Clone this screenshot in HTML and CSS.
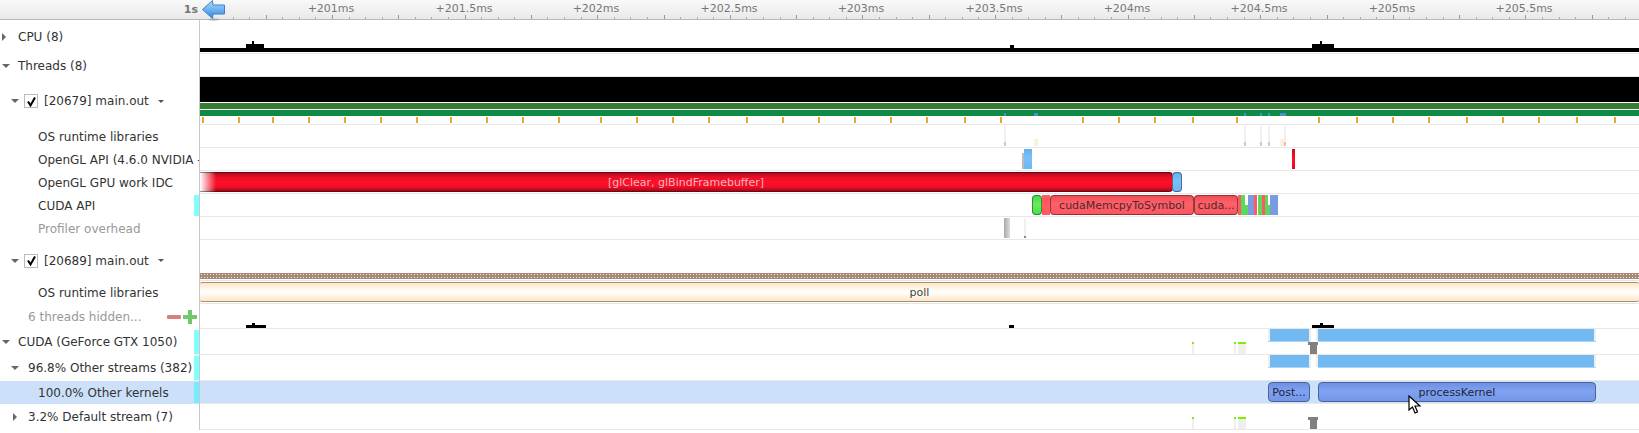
FILE: index.html
```html
<!DOCTYPE html>
<html lang="en">
<head>
    <meta charset="UTF-8">
    <title>Timeline</title>
    <link rel="stylesheet" href="styles.css">
    <script src="script.js" defer></script>
</head>
<body>
    <div class="timeline">
        <div class="ruler">
            <div class="rulerCorner">1s</div>
            <div class="rulerScale" id="rulerScale">
                <svg class="backArrow" width="24" height="22" viewBox="0 0 24 22">
                    <defs>
                        <linearGradient id="arrowFill" x1="0" y1="0" x2="0" y2="1">
                            <stop offset="0" stop-color="#b4dcfa"/>
                            <stop offset="0.5" stop-color="#6db4f0"/>
                            <stop offset="1" stop-color="#3384d8"/>
                        </linearGradient>
                    </defs>
                    <ellipse cx="12" cy="19.5" rx="6" ry="1.2" fill="#999" opacity="0.6"/>
                    <path d="M0.5 9.5 L10.5 0.5 L11 5 L22.5 5 L22.5 14 L11 14 L10.5 18.5 Z" fill="url(#arrowFill)" stroke="#3a80c8" stroke-width="1"/>
                </svg>
            </div>
        </div>

        <div class="row rowCpu">
            <div class="label level0"><span class="tri triRight"></span>CPU (8)</div>
            <div class="track">
                <div class="cpuBar"></div>
                <i class="bump" style="left:46px;width:18px"></i>
                <i class="bumpTop" style="left:52px;width:2px"></i>
                <i class="bump bumpSmall" style="left:810px;width:4px"></i>
                <i class="bump" style="left:1112px;width:22px"></i>
                <i class="bumpTop" style="left:1120px;width:2px"></i>
            </div>
        </div>

        <div class="row rowPlain">
            <div class="label level0"><span class="tri triDown"></span>Threads (8)</div>
            <div class="track"></div>
        </div>

        <div class="row rowThread">
            <div class="label level1">
                <span class="tri triDown"></span>
                <span class="check"><svg width="11" height="11" viewBox="0 0 11 11"><path d="M2 5.5 L4.5 9.5 L9 1.5" fill="none" stroke="#000" stroke-width="2"/></svg></span>
                <span class="threadName">[20679] main.out</span>
                <span class="tri triSmall"></span>
            </div>
            <div class="track">
                <div class="barBlack"></div>
                <div class="barGreenDark"></div>
                <div class="barGreen">
                    <i class="syncMark" style="left:804px;width:2px"></i>
                    <i class="syncMark" style="left:834px;width:4px"></i>
                    <i class="syncMark" style="left:1044px;width:2px"></i>
                    <i class="syncMark" style="left:1060px;width:2px"></i>
                    <i class="syncMark" style="left:1068px;width:2px"></i>
                    <i class="syncMark" style="left:1080px;width:6px"></i>
                </div>
                <div class="tickRow" id="threadTicks"></div>
            </div>
        </div>

        <div class="row rowPlain">
            <div class="label level2">OS runtime libraries</div>
            <div class="track">
                <i class="osCall" style="left:804px"></i>
                <i class="osCream" style="left:834px"></i>
                <i class="osCall" style="left:1044px"></i>
                <i class="osCall" style="left:1060px"></i>
                <i class="osCall" style="left:1068px"></i>
                <i class="osCream" style="left:1080px"></i>
                <i class="osCall" style="left:1084px"></i>
            </div>
        </div>

        <div class="row rowPlain">
            <div class="label level2"><span class="clip">OpenGL API (4.6.0 NVIDIA - Compatibility</span></div>
            <div class="track">
                <i class="ev flat evGrey" style="left:822px;width:2px"></i>
                <i class="ev flat evBlue" style="left:824px;width:8px"></i>
                <i class="ev flat evRedFlat" style="left:1092px;width:3px"></i>
            </div>
        </div>

        <div class="row rowPlain">
            <div class="label level2">OpenGL GPU work IDC</div>
            <div class="track">
                <div class="ev pill evGlRed" style="left:0;width:973px">[glClear, glBindFramebuffer]</div>
                <i class="ev pill evBluePill" style="left:972px;width:10px"></i>
            </div>
        </div>

        <div class="row rowPlain">
            <div class="label level2 marked">CUDA API</div>
            <div class="track">
                <i class="ev pill evGreen" style="left:832px;width:10px"></i>
                <i class="ev flat evSalmon" style="left:842px;width:8px"></i>
                <div class="ev pill evSalmonPill" style="left:850px;width:144px">cudaMemcpyToSymbol</div>
                <div class="ev pill evSalmonPill" style="left:994px;width:44px">cuda...</div>
                <i class="ev flat evSalmon" style="left:1038px;width:3px"></i>
                <i class="ev flat evLime" style="left:1041px;width:4px"></i>
                <i class="ev flat evLime evLow" style="left:1045px;width:3px"></i>
                <i class="ev flat evPeri" style="left:1048px;width:6px"></i>
                <i class="ev flat evSalmon" style="left:1054px;width:3px"></i>
                <i class="ev flat evLime" style="left:1058px;width:4px"></i>
                <i class="ev flat evSalmon" style="left:1062px;width:3px"></i>
                <i class="ev flat evLime" style="left:1065px;width:3px"></i>
                <i class="ev flat evLime evLow" style="left:1068px;width:2px"></i>
                <i class="ev flat evPeri" style="left:1070px;width:8px"></i>
            </div>
        </div>

        <div class="row rowPlain">
            <div class="label level2 muted">Profiler overhead</div>
            <div class="track">
                <i class="ev flat evSilver" style="left:804px;width:6px"></i>
                <i class="osCall tallCall" style="left:824px"></i>
            </div>
        </div>

        <div class="row rowThreadShort">
            <div class="label level1">
                <span class="tri triDown"></span>
                <span class="check"><svg width="11" height="11" viewBox="0 0 11 11"><path d="M2 5.5 L4.5 9.5 L9 1.5" fill="none" stroke="#000" stroke-width="2"/></svg></span>
                <span class="threadName">[20689] main.out</span>
                <span class="tri triSmall"></span>
            </div>
            <div class="track"><div class="hatch"></div></div>
        </div>

        <div class="row rowPlain">
            <div class="label level2">OS runtime libraries</div>
            <div class="track"><div class="poll">poll</div></div>
        </div>

        <div class="row rowHidden">
            <div class="label level1Plain muted">
                6 threads hidden...
                <span class="minus"></span>
                <span class="plus"></span>
            </div>
            <div class="track">
                <i class="lowBump" style="left:46px;width:20px"></i>
                <i class="lowBumpTop" style="left:52px;width:3px"></i>
                <i class="lowBump" style="left:809px;width:5px"></i>
                <i class="lowBump" style="left:1112px;width:22px"></i>
                <i class="lowBumpTop" style="left:1120px;width:3px"></i>
            </div>
        </div>

        <div class="row rowGpu">
            <div class="label level0 marked"><span class="tri triDown"></span>CUDA (GeForce GTX 1050)</div>
            <div class="track">
                <i class="kernelBlock" style="left:1070px;width:39px"></i>
                <i class="kernelBlock" style="left:1118px;width:276px"></i>
                <i class="kernelLine" style="left:1068px;width:42px"></i>
                <i class="kernelLine" style="left:1118px;width:278px"></i>
                <i class="tee" style="left:1108px"></i>
                <i class="tip" style="left:992px;width:2px"></i>
                <i class="tip" style="left:1034px;width:2px"></i>
                <i class="tip" style="left:1038px;width:8px"></i>
            </div>
        </div>

        <div class="row rowGpu">
            <div class="label level1Tri marked"><span class="tri triDown"></span>96.8% Other streams (382)</div>
            <div class="track">
                <i class="kernelBlock" style="left:1070px;width:39px"></i>
                <i class="kernelBlock" style="left:1118px;width:276px"></i>
                <i class="kernelLine" style="left:1068px;width:42px"></i>
                <i class="kernelLine" style="left:1118px;width:278px"></i>
            </div>
        </div>

        <div class="row rowSelected">
            <div class="label level2 marked">100.0% Other kernels</div>
            <div class="track">
                <div class="ev pill evKernel" style="left:1068px;width:42px">Post...</div>
                <div class="ev pill evKernel" style="left:1118px;width:278px">processKernel</div>
            </div>
        </div>

        <div class="row rowGpu">
            <div class="label level1Tri"><span class="tri triRight"></span>3.2% Default stream (7)</div>
            <div class="track">
                <i class="tee" style="left:1108px"></i>
                <i class="tip" style="left:992px;width:2px"></i>
                <i class="tip" style="left:1034px;width:2px"></i>
                <i class="tip" style="left:1038px;width:8px"></i>
            </div>
        </div>
    </div>

    <svg class="cursor" width="13" height="20" viewBox="0 0 13 20">
        <path d="M1 1 L1 15 L4.5 12 L7 18 L9.5 17 L7 11 L12 11 Z" fill="#fff" stroke="#000" stroke-width="1.2"/>
    </svg>
</body>
</html>
```

FILE: styles.css
```css
body {
    margin: 0;
    background-color: #fff;
    font-family: "DejaVu Sans", sans-serif;
    font-size: 12px;
    color: #333;
    overflow: hidden;
}
.timeline {
    width: 1639px;
}

/* ruler */
.ruler {
    display: flex;
    height: 19px;
    border-bottom: 1px solid #b8b8b8;
    background: linear-gradient(#f9f9f9, #e9e9e9);
}
.rulerCorner {
    box-sizing: border-box;
    width: 200px;
    padding-right: 2px;
    line-height: 20px;
    text-align: right;
    font-size: 11px;
    font-weight: bold;
    color: #777;
}
.rulerScale {
    position: relative;
    flex: 1;
}
.rulerLabel {
    position: absolute;
    top: 2px;
    width: 80px;
    margin-left: -41px;
    text-align: center;
    font-size: 11px;
    color: #777;
}
.rulerTick {
    position: absolute;
    bottom: 0;
    width: 1px;
    height: 2px;
    background-color: #aaa;
}
.rulerTick.major {
    height: 4px;
    background-color: #999;
}
.backArrow {
    position: absolute;
    left: 2px;
    top: 0;
    z-index: 2;
}

/* rows */
.row {
    display: flex;
}
.rowCpu { height: 34px; }
.rowPlain { height: 23px; }
.rowThread { height: 48px; }
.rowThreadShort { height: 41px; }
.rowHidden { height: 25px; }
.rowGpu { height: 26px; }
.rowSelected {
    height: 23px;
    background-color: #cce0fa;
}
.label {
    position: relative;
    box-sizing: border-box;
    display: flex;
    align-items: center;
    width: 200px;
    flex-shrink: 0;
    border-right: 1px solid #c8c8c8;
    white-space: nowrap;
}
.level0 { padding-left: 18px; }
.level1 { padding-left: 11px; }
.level1Plain { padding-left: 28px; }
.level1Tri { padding-left: 28px; }
.level2 { padding-left: 38px; }
.muted { color: #999; }
.clip {
    overflow: hidden;
}
.marked::after {
    content: "";
    position: absolute;
    right: 0;
    top: 1px;
    bottom: 1px;
    width: 5px;
    background-color: #80ffff;
}
.rowSelected .marked::after {
    background-color: #70f0ff;
}
.track {
    position: relative;
    box-sizing: border-box;
    flex: 1;
    border-bottom: 1px solid #e8e8e8;
}
.track i {
    position: absolute;
    display: block;
}

/* tree arrows */
.tri {
    position: absolute;
    width: 0;
    height: 0;
    border-style: solid;
    border-color: transparent;
}
.triRight {
    border-width: 4px 0 4px 4px;
    border-left-color: #666;
}
.triDown {
    border-width: 4px 4px 0 4px;
    border-top-color: #666;
}
.level0 .tri { left: 2px; }
.level1Tri .tri { left: 11px; }
.level1Tri .triRight { left: 13px; }
.level1 .triDown { left: 11px; }
.level1 .tri.triSmall {
    position: static;
    margin-left: 9px;
    border-width: 3px 3px 0 3px;
    border-top-color: #555;
}
.check {
    display: flex;
    align-items: center;
    justify-content: center;
    box-sizing: border-box;
    width: 14px;
    height: 14px;
    margin-left: 13px;
    border: 1px solid #bbb;
    background-color: #fff;
}
.threadName {
    margin-left: 6px;
}

/* cpu graph */
.cpuBar {
    height: 4px;
    margin-top: 28px;
    background-color: #000;
}
.bump {
    top: 24px;
    height: 4px;
    background-color: #000;
}
.bumpSmall {
    top: 25px;
    height: 3px;
}
.bumpTop {
    top: 21px;
    height: 3px;
    background-color: #000;
}
.lowBump {
    bottom: 0;
    height: 3px;
    background-color: #000;
}
.lowBumpTop {
    bottom: 3px;
    height: 2px;
    background-color: #000;
}

/* thread bars */
.barBlack {
    height: 25px;
    margin-bottom: 1px;
    background-color: #000;
}
.barGreenDark {
    height: 6px;
    margin-bottom: 1px;
    background-color: #367d32;
}
.barGreen {
    position: relative;
    height: 6px;
    margin-bottom: 1px;
    background-color: #0f8a43;
}
.syncMark {
    bottom: 0;
    height: 3px;
    background-color: #4a90d0;
}
.tickRow {
    position: relative;
    height: 6px;
}
.threadTick {
    position: absolute;
    top: 0;
    width: 2px;
    height: 6px;
    background-color: #e8a830;
}
.osCall {
    top: 1px;
    bottom: 1px;
    width: 2px;
    background: linear-gradient(#f0f0f0 80%, #d8c8b0 80%);
}
.tallCall {
    background: linear-gradient(#f0f0f0 90%, #888 90%);
}
.osCream {
    bottom: 1px;
    width: 4px;
    height: 7px;
    background: linear-gradient(90deg, #fdf4e6, #fbecd6);
}

/* events */
.ev {
    position: absolute;
    top: 1px;
    bottom: 1px;
    box-sizing: border-box;
    overflow: hidden;
    line-height: 19px;
    text-align: center;
    white-space: nowrap;
}
.pill {
    border-radius: 4px;
    border: 1px solid rgba(0, 0, 0, 0.4);
}
.evGlRed {
    border-left: none;
    border-radius: 0 4px 4px 0;
    color: #f8b4bc;
    font-size: 11px;
    background:
        linear-gradient(90deg, #fff 0, rgba(255, 255, 255, 0) 16px),
        linear-gradient(#b00a1c, #e80e26 22%, #ff1028 50%, #f00e26 78%, #a00818);
}
.evBluePill,
.evBlue {
    background: linear-gradient(#64aeea, #78c0f6 40%, #70b8f2);
}
.evBlue { top: 1px; }
.evGrey {
    top: 5px;
    background-color: #bbb;
}
.evRedFlat {
    background: linear-gradient(#d00a1c, #ff1028 50%, #e00a20);
}
.evGreen {
    background: linear-gradient(#4cd84c, #64ee5c 50%, #50dc50);
}
.evSalmon {
    background-color: #ff5a64;
}
.evSalmonPill {
    background: linear-gradient(#f04c58, #ff6068 40%, #fb5660);
    font-size: 11px;
    color: #4a2a30;
}
.evLime {
    background-color: #5cd85c;
}
.evLow {
    top: 11px;
}
.evPeri {
    background-color: #7b9be0;
}
.evSilver {
    background: linear-gradient(90deg, #aaa, #ddd);
}
.evKernel {
    background: linear-gradient(#6f8fe0, #80a2f2 45%, #7496e6);
    border-color: #4a62a0;
    font-size: 11px;
    color: #20263c;
}

/* second thread */
.hatch {
    height: 6px;
    margin-top: 33px;
    background-color: #a88a74;
    background-image: radial-gradient(#f0e8e0 35%, transparent 45%);
    background-size: 3px 3px;
}
.poll {
    position: absolute;
    top: 1px;
    left: 0;
    right: 0;
    bottom: 1px;
    box-sizing: border-box;
    border-top: 1px solid #a89070;
    border-bottom: 1px solid #a89070;
    border-radius: 2px;
    line-height: 19px;
    text-align: center;
    font-size: 11px;
    color: #444;
    background: linear-gradient(#fce6c8, #fffdf9 45%, #fffdf9 55%, #fce6c8);
}
.minus {
    position: absolute;
    left: 167px;
    top: 11px;
    width: 14px;
    height: 4px;
    border-radius: 1px;
    background-color: #d88080;
}
.plus {
    position: absolute;
    left: 183px;
    top: 6px;
    width: 14px;
    height: 14px;
    background:
        linear-gradient(#70c870, #70c870) center / 14px 4px no-repeat,
        linear-gradient(#70c870, #70c870) center / 4px 14px no-repeat;
}

/* cuda rows */
.kernelBlock {
    top: 0;
    height: 12px;
    background-color: #72b9f2;
    box-shadow: -2px 0 #eee, 2px 0 #eee;
}
.kernelLine {
    top: 12px;
    height: 1px;
    background-color: #a8d4f6;
}
.tee {
    top: 13px;
    bottom: 0;
    width: 10px;
    background:
        linear-gradient(#808080, #808080) top / 10px 3px no-repeat,
        linear-gradient(#808080, #808080) center / 7px 12px no-repeat;
}
.tip {
    top: 13px;
    bottom: 0;
    background: linear-gradient(#7cf000 2px, #efefef 2px);
}
.cursor {
    position: absolute;
    left: 1408px;
    top: 395px;
}
```

FILE: script.js
```js
const threadTickXs = [202, 238, 272, 308, 344, 380, 416, 450, 486, 522, 558, 600, 636, 672,
    708, 746, 782, 818, 854, 890, 926, 964, 1000, 1082, 1118, 1154,
    1192, 1236, 1318, 1356, 1392, 1428, 1466, 1502, 1538, 1576, 1614];

const leftOffset = 200; // 왼쪽 라벨 칸 너비
const msWidth = 265.2;
const firstMsX = 332 - leftOffset;

function buildRuler() {
    const scale = document.getElementById('rulerScale');
    const minorStep = msWidth / 16;
    for (let i = -6; i * minorStep + firstMsX < 1440; i++) {
        const tick = document.createElement('div');
        tick.className = i % 4 === 0 ? 'rulerTick major' : 'rulerTick';
        tick.style.left = Math.round(firstMsX + i * minorStep) + 'px';
        scale.appendChild(tick);
    }
    for (let i = 0; i < 10; i++) {
        const label = document.createElement('div');
        label.className = 'rulerLabel';
        label.textContent = '+' + (201 + i / 2) + 'ms';
        label.style.left = Math.round(firstMsX + i * msWidth / 2) + 'px';
        scale.appendChild(label);
    }
}

function buildThreadTicks() {
    const row = document.getElementById('threadTicks');
    threadTickXs.forEach((x) => {
        const tick = document.createElement('div');
        tick.className = 'threadTick';
        tick.style.left = (x - leftOffset) + 'px';
        row.appendChild(tick);
    });
}

buildRuler();
buildThreadTicks();
```
